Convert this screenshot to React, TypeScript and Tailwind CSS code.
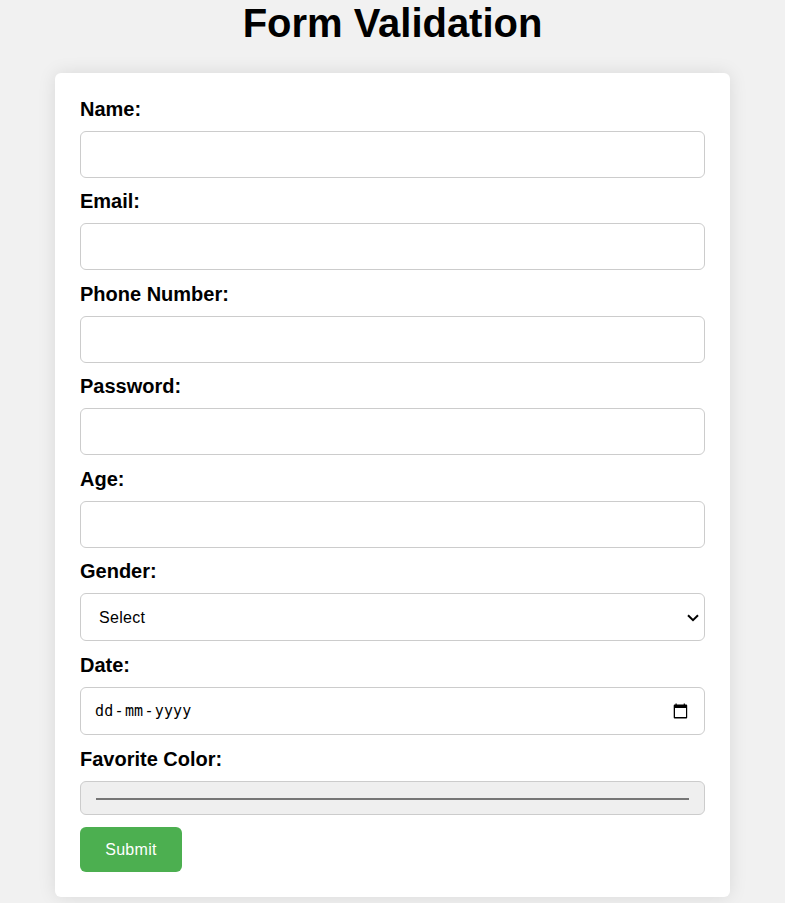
import React from "react";

const fields = [
  { label: "Name:", id: "name", type: "text", gap: "mt-[10px]" },
  { label: "Email:", id: "email", type: "email", gap: "mt-[10px]" },
  { label: "Phone Number:", id: "phone", type: "tel", gap: "mt-[11px]" },
  { label: "Password:", id: "password", type: "password", gap: "mt-[10px]" },
  { label: "Age:", id: "age", type: "text", gap: "mt-[11px]" },
];

const labelClass = "block h-[26px] text-[20px] leading-[26px] font-bold text-black";
const boxClass = "w-full rounded-[6px] border border-[#cccccc] bg-white";

export default function App() {
  return (
    <main className="h-[903px] overflow-hidden bg-[#f1f1f1] font-['Liberation_Sans',Arial,sans-serif] text-black">
      <h1 className="h-[73px] text-center text-[40px] leading-[46px] font-bold tracking-[-0.03px]">Form Validation</h1>
      <form className="mx-[55px] h-[824px] rounded-[6px] bg-white px-[25px] pt-[13px] shadow-[0_0_18px_rgba(0,0,0,0.1)]" onSubmit={(e) => e.preventDefault()}>
        {fields.map((f) => (
          <div key={f.id} className={f.gap}>
            <label htmlFor={f.id} className={labelClass}>{f.label}</label>
            <input id={f.id} type={f.type} className={`${boxClass} mt-[9px] block h-[47px] px-[14px]`} />
          </div>
        ))}
        <div className="mt-[10px]">
          <span className={labelClass}>Gender:</span>
          <button type="button" className={`${boxClass} mt-[9px] flex h-[48px] items-center justify-between pt-px pr-[5px] pl-[18px] text-[16px] tracking-[0.3px]`}>
            Select
            <svg width="12" height="8" viewBox="0 0 12 8" fill="none" stroke="black" strokeWidth="2">
              <path d="M1 1.2 6 6.2 11 1.2" />
            </svg>
          </button>
        </div>
        <div className="mt-[11px]">
          <span className={labelClass}>Date:</span>
          <div className={`${boxClass} mt-[9px] flex h-[48px] items-center justify-between pr-[16px] pl-[13px]`}>
            <div className="flex font-['DejaVu_Sans_Mono',monospace] text-[15px] tracking-[0.1px]">
              <span className="px-px">dd</span><span className="px-[0.25px]">-</span>
              <span className="px-px">mm</span><span className="px-[0.25px]">-</span>
              <span className="px-px">yyyy</span>
            </div>
            <svg width="15" height="16" viewBox="0 0 15 16" fill="black">
              <path fillRule="evenodd" d="M2.500 .5h1.200v1h7v-1h1.200v1h1.300q1 0 1 1V14.500q0 1-1 1h-11.500q-1 0-1-1V2.500q0-1 1-1h.8ZM2 5v9h11V5Z" />
            </svg>
          </div>
        </div>
        <div className="mt-[11px]">
          <span className={labelClass}>Favorite Color:</span>
          <div className="mt-[9px] flex h-[34px] items-center rounded-[6px] border border-[#cccccc] bg-[#efefef] px-[15px] pt-[2px]">
            <div className="h-[2px] w-full bg-[#767676]" />
          </div>
        </div>
        <button type="submit" className="mt-[12px] h-[45px] w-[102px] rounded-[6px] bg-[#4caf50] text-[16px] tracking-[0.3px] text-white">Submit</button>
      </form>
    </main>
  );
}
